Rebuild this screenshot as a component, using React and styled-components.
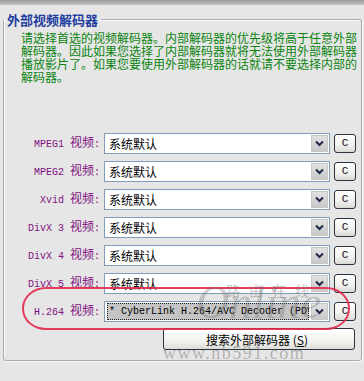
import React from 'react';
import styled, { createGlobalStyle } from 'styled-components';

const Global = createGlobalStyle`
  html, body { margin: 0; padding: 0; background: #e6e6e6; }
  body { width: 364px; height: 381px; overflow: hidden; font-family: "Noto Sans CJK SC", sans-serif; }
`;

const Page = styled.div`
  position: relative;
  width: 364px;
  height: 381px;
  background: #e6e6e6;
`;

const TopBand = styled.div`
  height: 5px;
  background: linear-gradient(#9c9c9c, #c2c2c2);
`;

const Group = styled.fieldset`
  margin: 8px 2px 0 3px;
  padding: 0;
  min-inline-size: 0;
  border: 1px solid #a9a9a9;
  border-radius: 3px;
  box-shadow: inset 1px 1px 0 #fbfbfb, 1px 1px 0 #fbfbfb;
`;

const Legend = styled.legend`
  padding: 0 3px;
  margin: 0;
  font: bold 13px/13px "Noto Sans CJK SC", sans-serif;
  color: #1f3d9e;
`;

const Inner = styled.div`
  padding: 5px 5px 10px 17px;
`;

const Desc = styled.p`
  margin: 0;
  font-size: 12px;
  line-height: 13px;
  color: #0a840f;
  white-space: nowrap;
`;

const Rows = styled.div`
  margin-top: 48px;
  display: flex;
  flex-direction: column;
  gap: 7px;
`;

const Row = styled.div`
  display: grid;
  grid-template-columns: 79px 226px 22px;
  column-gap: 4px;
  align-items: center;
  height: 21px;
`;

const Label = styled.div`
  text-align: right;
  color: #80107f;
  white-space: nowrap;
  font-size: 12px;
  line-height: 21px;
`;

const Code = styled.span`
  font-family: "Liberation Mono", monospace;
  font-size: 10px;
`;

const Select = styled.div`
  box-sizing: border-box;
  height: 21px;
  border: 1px solid #7f9db9;
  background: #fff;
  display: flex;
  align-items: center;
  padding: 1px 1px 1px 2px;
`;

const Value = styled.div`
  flex: 1;
  min-width: 0;
  height: 17px;
  display: flex;
  align-items: center;
  padding-left: 2px;
  overflow: hidden;
  white-space: nowrap;
  font-size: ${p => (p.$mono ? '10px' : '12px')};
  font-family: ${p => (p.$mono ? '"Liberation Mono", monospace' : '"Noto Sans CJK SC", sans-serif')};
  color: #000;
  background: ${p => (p.$active ? '#c4c4c4' : 'transparent')};
  outline: ${p => (p.$active ? '1px dotted #222' : 'none')};
  outline-offset: -1px;
  margin-right: 2px;
`;

const Arrow = styled.div`
  width: 17px;
  height: 17px;
  box-sizing: border-box;
  border: 1px solid #c8c8c8;
  background: linear-gradient(#e2e2e2, #c9c9c9);
  display: flex;
  align-items: center;
  justify-content: center;
`;

const CButton = styled.div`
  box-sizing: border-box;
  width: 22px;
  height: 19px;
  border: 1px solid #2b3340;
  border-radius: 3px;
  background: linear-gradient(#ffffff, #f0f0ee 60%, #d8d8d4);
  display: flex;
  align-items: center;
  justify-content: center;
  font-family: "Liberation Mono", monospace;
  font-size: 11px;
  color: #111;
`;

const Footer = styled.div`
  margin-top: 8px;
  display: flex;
  justify-content: flex-end;
  padding-right: 1px;
`;

const SearchButton = styled.div`
  box-sizing: border-box;
  width: 192px;
  height: 22px;
  border: 1px solid #2b3340;
  border-radius: 3px;
  background: linear-gradient(#ffffff, #f3f3f1 60%, #dcdcd8);
  display: flex;
  align-items: center;
  justify-content: center;
  font-size: 12px;
  color: #000;
  padding-right: 4px;
`;

const Under = styled.span`
  text-decoration: underline;
`;

const Ring = styled.div`
  position: absolute;
  left: 22px;
  top: 287px;
  width: 328px;
  height: 43px;
  box-sizing: border-box;
  border: 2px solid rgba(226, 40, 75, 0.9);
  border-radius: 24px / 21px;
  pointer-events: none;
`;

const MarkUrl = styled.div`
  position: absolute;
  left: 163px;
  top: 343px;
  font-family: "Liberation Serif", serif;
  font-size: 18px;
  letter-spacing: 1.5px;
  color: rgba(110, 110, 110, 0.45);
  pointer-events: none;
`;

const MarkScript = styled.div`
  position: absolute;
  left: 196px;
  top: 278px;
  font-family: "Liberation Serif", serif;
  font-style: italic;
  font-size: 46px;
  line-height: 50px;
  color: rgba(110, 110, 110, 0.32);
  pointer-events: none;
`;

const MarkCn = styled.div`
  position: absolute;
  left: 226px;
  top: 280px;
  font-size: 14px;
  letter-spacing: 9px;
  color: rgba(110, 110, 110, 0.4);
  pointer-events: none;
`;

const Chevron = () => (
  <svg width="9" height="7" viewBox="0 0 9 7">
    <path d="M1 1.5 L4.5 5 L8 1.5" fill="none" stroke="#1e2a48" strokeWidth="2" />
  </svg>
);

const rows = [
  { code: 'MPEG1', value: '系统默认' },
  { code: 'MPEG2', value: '系统默认' },
  { code: 'Xvid', value: '系统默认' },
  { code: 'DivX 3', value: '系统默认' },
  { code: 'DivX 4', value: '系统默认' },
  { code: 'DivX 5', value: '系统默认' },
  { code: 'H.264', value: '* CyberLink H.264/AVC Decoder (PDVD8)', active: true },
];

export default function App() {
  return (
    <Page>
      <Global />
      <TopBand />
      <Group>
        <Legend>外部视频解码器</Legend>
        <Inner>
          <Desc>
            请选择首选的视频解码器。内部解码器的优先级将高于任意外部<br />
            解码器。因此如果您选择了内部解码器就将无法使用外部解码器<br />
            播放影片了。如果您要使用外部解码器的话就请不要选择内部的<br />
            解码器。
          </Desc>
          <Rows>
            {rows.map(r => (
              <Row key={r.code}>
                <Label>
                  <Code>{r.code} </Code>视频<Code>:</Code>
                </Label>
                <Select>
                  <Value $mono={r.active} $active={r.active}>{r.value}</Value>
                  <Arrow><Chevron /></Arrow>
                </Select>
                <CButton>C</CButton>
              </Row>
            ))}
          </Rows>
          <Footer>
            <SearchButton>搜索外部解码器&nbsp;(<Under>S</Under>)</SearchButton>
          </Footer>
        </Inner>
      </Group>
      <Ring />
      <MarkCn>路由在线</MarkCn>
      <MarkScript>Online</MarkScript>
      <MarkUrl>www.nb591.com</MarkUrl>
    </Page>
  );
}
